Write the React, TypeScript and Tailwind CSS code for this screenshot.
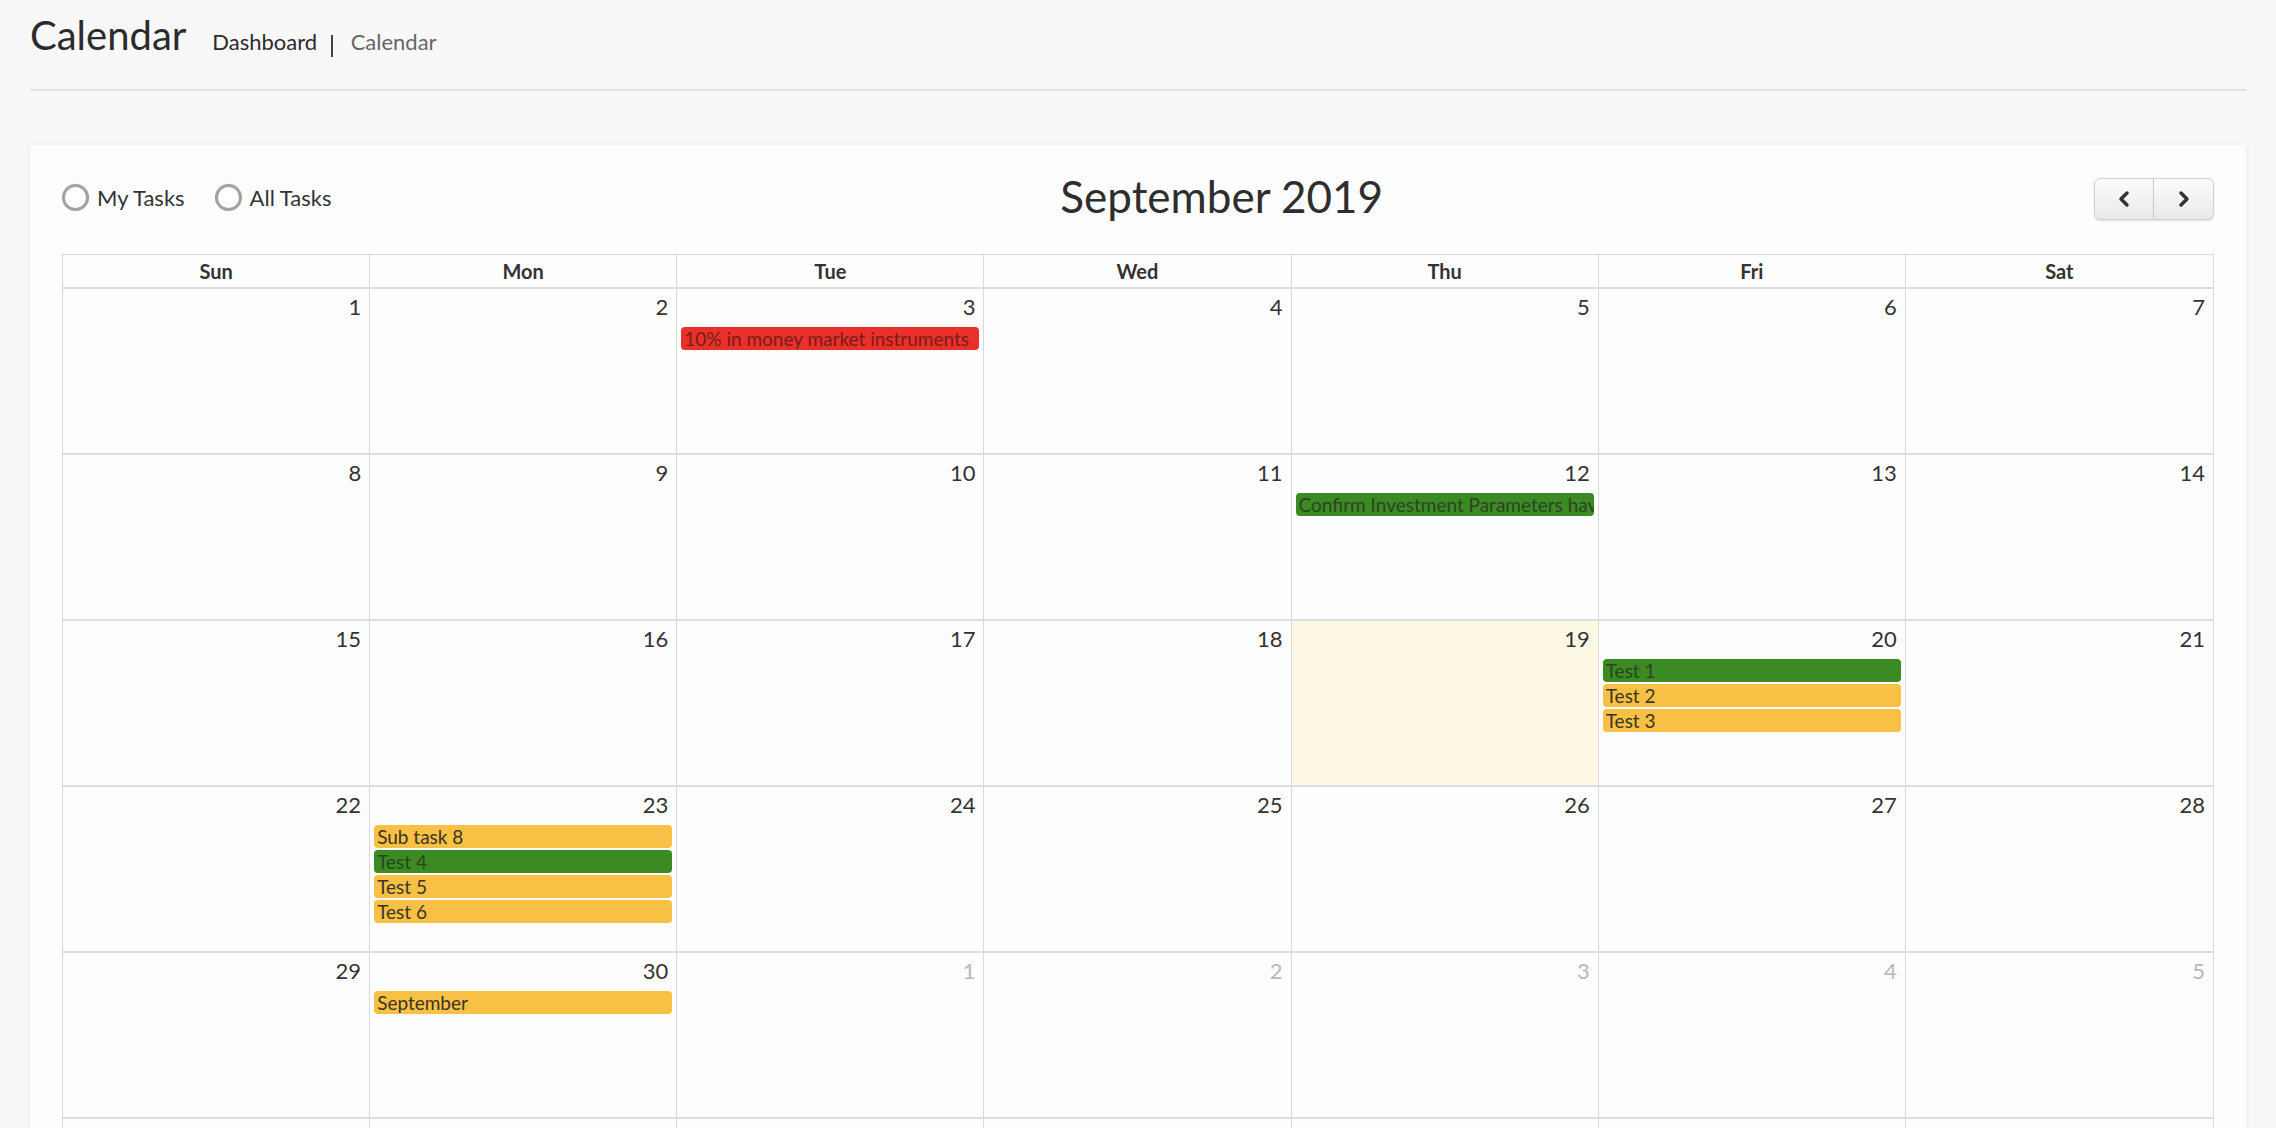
import { ChevronLeft, ChevronRight } from 'lucide-react';

type EventColor = 'red' | 'green' | 'yellow';

interface CalEvent {
  title: string;
  color: EventColor;
}

const eventClass: Record<EventColor, string> = {
  red: 'bg-[#e9302a] text-[#7a1d18]',
  green: 'bg-[#3b8a24] text-[#2a461f]',
  yellow: 'bg-[#f8c146] text-[#3b3425]',
};

const events: Record<string, CalEvent[]> = {
  '9-3': [{ title: '10% in money market instruments', color: 'red' }],
  '9-12': [{ title: 'Confirm Investment Parameters have been set', color: 'green' }],
  '9-20': [
    { title: 'Test 1', color: 'green' },
    { title: 'Test 2', color: 'yellow' },
    { title: 'Test 3', color: 'yellow' },
  ],
  '9-23': [
    { title: 'Sub task 8', color: 'yellow' },
    { title: 'Test 4', color: 'green' },
    { title: 'Test 5', color: 'yellow' },
    { title: 'Test 6', color: 'yellow' },
  ],
  '9-30': [{ title: 'September', color: 'yellow' }],
};

const weekdays = ['Sun', 'Mon', 'Tue', 'Wed', 'Thu', 'Fri', 'Sat'];

// Sep 1 2019 is a Sunday: 6 rows, Sep 1 .. Oct 12
const days = Array.from({ length: 42 }, (_, i) => {
  const inSep = i < 30;
  return { month: inSep ? 9 : 10, day: inSep ? i + 1 : i - 29 };
});

function Radio({ label }: { label: string }) {
  return (
    <label className="flex items-center gap-[8px] cursor-pointer">
      <span className="w-[27px] h-[27px] rounded-full border-[3px] border-[#a3a3a3] bg-white shadow-[0_0_1px_rgba(0,0,0,0.2)]" />
      <span className="text-[22px] text-[#333]">{label}</span>
    </label>
  );
}

function DayCell({ month, day, col }: { month: number; day: number; col: number }) {
  const list = events[`${month}-${day}`] ?? [];
  const isToday = month === 9 && day === 19;
  const other = month !== 9;
  return (
    <div
      className={`h-[166px] border-b-2 border-[#dedede] ${col < 6 ? 'border-r' : ''} border-r-[#d9d9d9] ${
        isToday ? 'bg-[#fcf8e3]' : ''
      }`}
    >
      <div
        className={`h-[38px] pt-[3px] pr-[8px] text-right text-[22px] leading-[30px] ${
          other ? 'text-[#b8b8b8]' : 'text-[#333]'
        }`}
      >
        {day}
      </div>
      <div className="flex flex-col gap-[2px] px-[4px]">
        {list.map((e) => (
          <div
            key={e.title}
            className={`h-[23px] rounded-[4px] px-[3px] text-[19px] leading-[23px] whitespace-nowrap overflow-hidden ${eventClass[e.color]}`}
          >
            {e.title}
          </div>
        ))}
      </div>
    </div>
  );
}

export default function App() {
  return (
    <div className="min-h-screen bg-[#f8f8f8] px-[30px] font-['Lato',sans-serif]">
      {/* Page header */}
      <div className="flex items-baseline pt-[15px] pb-[31px] border-b-2 border-[#e2e2e2]">
        <h1 className="text-[40px] leading-[40px] text-[#2b2b2b]">Calendar</h1>
        <div className="flex items-baseline ml-[26px] text-[22px]">
          <span className="text-[#2b2b2b]">Dashboard</span>
          <span className="ml-[14px] mr-[18px] w-[1.5px] h-[22px] bg-[#444] self-center translate-y-[4px]" />
          <span className="text-[#666]">Calendar</span>
        </div>
      </div>

      {/* Calendar card */}
      <div className="mt-[54px] bg-[#fdfdfd] shadow-[0_1px_5px_rgba(0,0,0,0.06)] px-[32px] pt-[33px]">
        <div className="flex items-center h-[42px] mb-[34px]">
          <div className="flex items-center gap-[30px] self-start mt-[3px]">
            <Radio label="My Tasks" />
            <Radio label="All Tasks" />
          </div>
          <div className="flex-1 pl-[18px] mb-[6px] text-center text-[44px] leading-[42px] text-[#2e2e2e]">
            September 2019
          </div>
          <div className="flex">
            <button className="w-[60px] h-[42px] flex items-center justify-center rounded-l-[6px] border border-[#d0d0d0] bg-linear-to-b from-[#fcfcfc] to-[#e8e8e8] shadow-[0_1px_2px_rgba(0,0,0,0.12)]">
              <ChevronLeft size={24} strokeWidth={3.5} color="#333" />
            </button>
            <button className="w-[60px] h-[42px] flex items-center justify-center rounded-r-[6px] border border-l-0 border-[#d0d0d0] bg-linear-to-b from-[#fcfcfc] to-[#e8e8e8] shadow-[0_1px_2px_rgba(0,0,0,0.12)]">
              <ChevronRight size={24} strokeWidth={3.5} color="#333" />
            </button>
          </div>
        </div>

        <div className="border-l border-r border-t border-[#d9d9d9]">
          <div className="grid grid-cols-7 border-b-2 border-[#dedede]">
            {weekdays.map((d, i) => (
              <div
                key={d}
                className={`h-[32px] flex items-center justify-center text-[20px] font-bold text-[#333] ${
                  i < 6 ? 'border-r border-[#d9d9d9]' : ''
                }`}
              >
                {d}
              </div>
            ))}
          </div>
          <div className="grid grid-cols-7">
            {days.map((d, i) => (
              <DayCell key={`${d.month}-${d.day}`} month={d.month} day={d.day} col={i % 7} />
            ))}
          </div>
        </div>
      </div>
    </div>
  );
}
